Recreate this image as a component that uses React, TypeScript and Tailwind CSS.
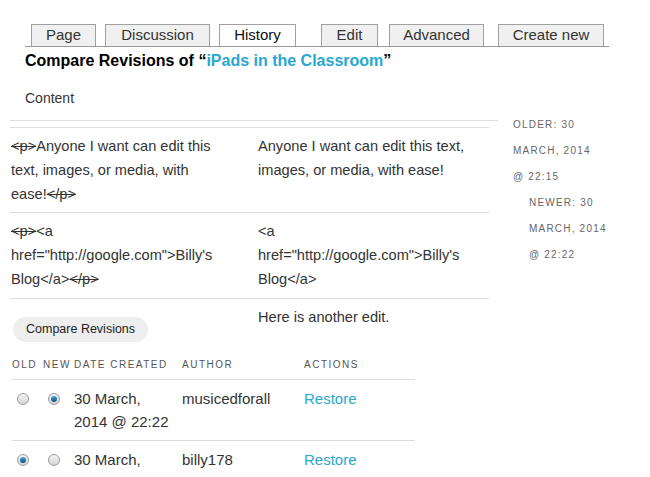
import React from "react";

const tabs = [
  { label: "Page", w: "w-[65px]", ml: "ml-[6px]", active: false },
  { label: "Discussion", w: "w-[105px]", ml: "ml-[9px]", active: false },
  { label: "History", w: "w-[77px]", ml: "ml-[9px]", active: true },
  { label: "Edit", w: "w-[57px]", ml: "ml-[25px]", active: false },
  { label: "Advanced", w: "w-[95px]", ml: "ml-[11px]", active: false },
  { label: "Create new", w: "w-[106px]", ml: "ml-[14px]", active: false },
];

const Strike = ({ children }: { children: React.ReactNode }) => (
  <span className="line-through">{children}</span>
);

const Radio = ({ checked }: { checked?: boolean }) => (
  <span className="inline-flex h-[12px] w-[12px] items-center justify-center rounded-full border border-[#9a9a9a] bg-gradient-to-b from-[#f4f4f4] to-[#d6d6d6]">
    {checked && (
      <span className="h-[6px] w-[6px] rounded-full bg-gradient-to-b from-[#4aa3d8] to-[#0b4f80]" />
    )}
  </span>
);

const revisions = [
  { date1: "30 March,", date2: "2014 @ 22:22", author: "musicedforall", old: false, nw: true },
  { date1: "30 March,", date2: "2014 @ 22:15", author: "billy178", old: true, nw: false },
];

const App = () => {
  return (
    <div className="relative h-[477px] w-[650px] overflow-hidden bg-white font-['Liberation_Sans',Arial,sans-serif] text-[#333]">
      {/* tabs */}
      <div className="ml-[25px] mt-[24px] flex w-[584px] items-end border-b border-[#999]">
        {tabs.map((t) => (
          <div
            key={t.label}
            className={`${t.w} ${t.ml} flex h-[22px] items-center justify-center border border-b-0 border-[#a0a0a0] text-[15px] ${
              t.active ? "bg-white text-[#111]" : "bg-[#f0f0f0] text-[#333]"
            }`}
          >
            {t.label}
          </div>
        ))}
      </div>

      <h1 className="ml-[25px] mt-[4px] text-[16px] font-bold leading-[20px] text-black">
        Compare Revisions of “<span className="text-[#2aa7cf]">iPads in the Classroom</span>”
      </h1>

      <div className="ml-[25px] mt-[17px] text-[14px] leading-[20px]">Content</div>

      <div className="flex">
        <div className="ml-[10px] w-[488px]">
          <div className="mt-[12px] border-t border-[#ddd]" />
          <div className="mt-[6px] w-[479px] border-t border-[#ddd]">
            <div className="flex border-b border-[#ddd] py-[6px] text-[14.6px] leading-[24px]">
              <div className="w-[248px] pl-[1px] pr-[32px]">
                <Strike>&lt;p&gt;</Strike>Anyone I want can edit this text, images, or media, with ease!
                <Strike>&lt;/p&gt;</Strike>
              </div>
              <div className="w-[231px] pr-[16px]">Anyone I want can edit this text, images, or media, with ease!</div>
            </div>
            <div className="flex border-b border-[#ddd] pb-[7px] pt-[6px] text-[14.6px] leading-[24px]">
              <div className="w-[248px] pl-[1px] pr-[32px]">
                <Strike>&lt;p&gt;</Strike>&lt;a href="http://google.com"&gt;Billy's Blog&lt;/a&gt;
                <Strike>&lt;/p&gt;</Strike>
              </div>
              <div className="w-[231px] pr-[16px]">
                &lt;a href="http://google.com"&gt;Billy's Blog&lt;/a&gt;
              </div>
            </div>
            <div className="flex pt-[6px] text-[14.6px] leading-[24px]">
              <div className="w-[248px] pl-[3px] pt-[11px]">
                <button className="h-[25px] rounded-full bg-[#eee] px-[13px] text-[12.5px] text-[#222]">
                  Compare Revisions
                </button>
              </div>
              <div className="w-[231px]">Here is another edit.</div>
            </div>
          </div>

          {/* revisions table */}
          <div className="ml-[2px] mt-[17px] w-[403px] text-[15px]">
            <div className="flex border-b border-[#ddd] pb-[8px] text-[10px] uppercase leading-[12px] tracking-[1.5px] text-[#555]">
              <div className="w-[31px]">Old</div>
              <div className="w-[31px]">New</div>
              <div className="w-[108px]">Date created</div>
              <div className="w-[122px]">Author</div>
              <div>Actions</div>
            </div>
            {revisions.map((r, i) => (
              <div key={i} className="flex border-b border-[#ddd] py-[7px] leading-[23px]">
                <div className="flex w-[31px] items-start pl-[5px] pt-[6px]">
                  <Radio checked={r.old} />
                </div>
                <div className="flex w-[31px] items-start pl-[5px] pt-[6px]">
                  <Radio checked={r.nw} />
                </div>
                <div className="w-[108px]">
                  {r.date1}
                  <br />
                  {r.date2}
                </div>
                <div className="w-[122px]">{r.author}</div>
                <div className="text-[#2aa7cf]">Restore</div>
              </div>
            ))}
          </div>
        </div>

        {/* sidebar */}
        <div className="ml-[15px] mt-[4px] text-[10px] uppercase leading-[26px] tracking-[1.2px] text-[#666]">
          <div>
            <div>Older: 30</div>
            <div>March, 2014</div>
            <div>@ 22:15</div>
          </div>
          <div className="pl-[16px]">
            <div>Newer: 30</div>
            <div>March, 2014</div>
            <div>@ 22:22</div>
          </div>
        </div>
      </div>
    </div>
  );
};

export default App;
